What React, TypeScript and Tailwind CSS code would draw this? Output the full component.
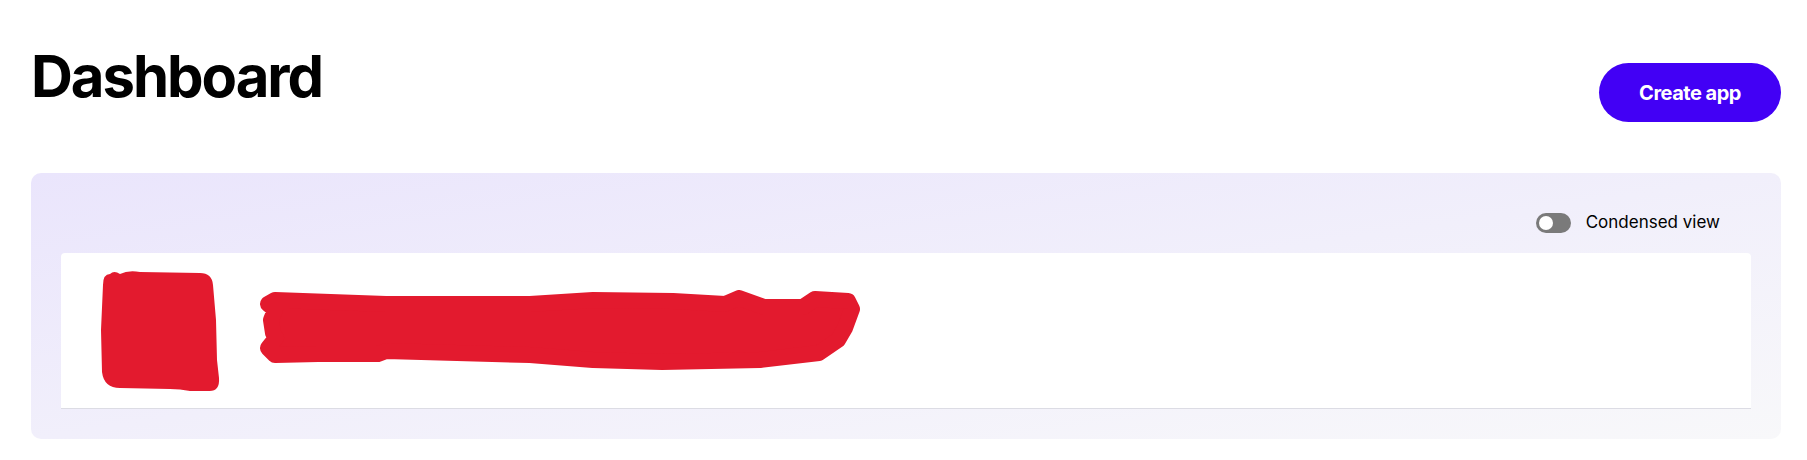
import React, { useState } from 'react';

const RedactBlock = () => (
  <svg width="130" height="122" viewBox="0 0 130 122" className="shrink-0">
    <path
      d="M10,4 Q14,0 20,4 Q28,0 40,2 L100,3 Q112,3 113,15 L116,50 L117,90 L119,108 Q120,122 108,121 L90,121 Q80,119 70,119 L20,118 Q4,118 2,102 L1,60 L3,15 Q3,4 10,4 Z"
      fill="#E31A2E"
    />
  </svg>
);

const RedactLine = () => (
  <svg width="606" height="82" viewBox="0 0 606 82" className="shrink-0">
    <polygon
      points="17,10 128,14 272,14 335,10 415,11 467,14 481,8 506,17 545,17 557,9 590,11 594,19 587,38 580,50 561,63 502,70 404,72 335,70 272,65 128,61 120,64 60,64 17,65 10,58 18,48 15,43 13,30 17,20 10,14"
      fill="#E31A2E"
      stroke="#E31A2E"
      strokeWidth="16"
      strokeLinejoin="round"
    />
  </svg>
);

const Toggle = ({ on, onClick }: { on: boolean; onClick: () => void }) => (
  <button
    onClick={onClick}
    className={`relative h-5 w-[35px] rounded-full ${on ? 'bg-[#4200F5]' : 'bg-[#7a7a7a]'}`}
  >
    <span
      className={`absolute top-[3px] h-[14px] w-[14px] rounded-full bg-white ${on ? 'left-[18px]' : 'left-[3px]'}`}
    />
  </button>
);

const App = () => {
  const [condensed, setCondensed] = useState(false);

  return (
    <div className="min-h-screen bg-white pl-[31px] pr-[26px] font-['Inter',sans-serif] text-black">
      <div className="flex items-start justify-between pt-[47px]">
        <h1 className="text-[58px] leading-none font-bold tracking-[-0.035em]">Dashboard</h1>
        <button className="mt-4 h-[59px] w-[182px] rounded-full bg-[#4200F5] text-[20px] font-bold tracking-tight text-white">
          Create app
        </button>
      </div>

      <div className="mt-[51px] rounded-[10px] bg-gradient-to-br from-[#EAE5FC] via-[#F1EFFB] to-[#F8F8FA] px-[30px] pt-[40px] pb-[30px]">
        <div className="flex h-5 items-center justify-end gap-[15px] pr-[31px]">
          <Toggle on={condensed} onClick={() => setCondensed(!condensed)} />
          <span className="text-[17px] text-black">Condensed view</span>
        </div>

        <div className="mt-5 flex h-[156px] items-center gap-[28px] rounded-t-[4px] border-b border-[#DCDCE4] bg-white pl-[39px]">
          <RedactBlock />
          <RedactLine />
        </div>
      </div>
    </div>
  );
};

export default App;
